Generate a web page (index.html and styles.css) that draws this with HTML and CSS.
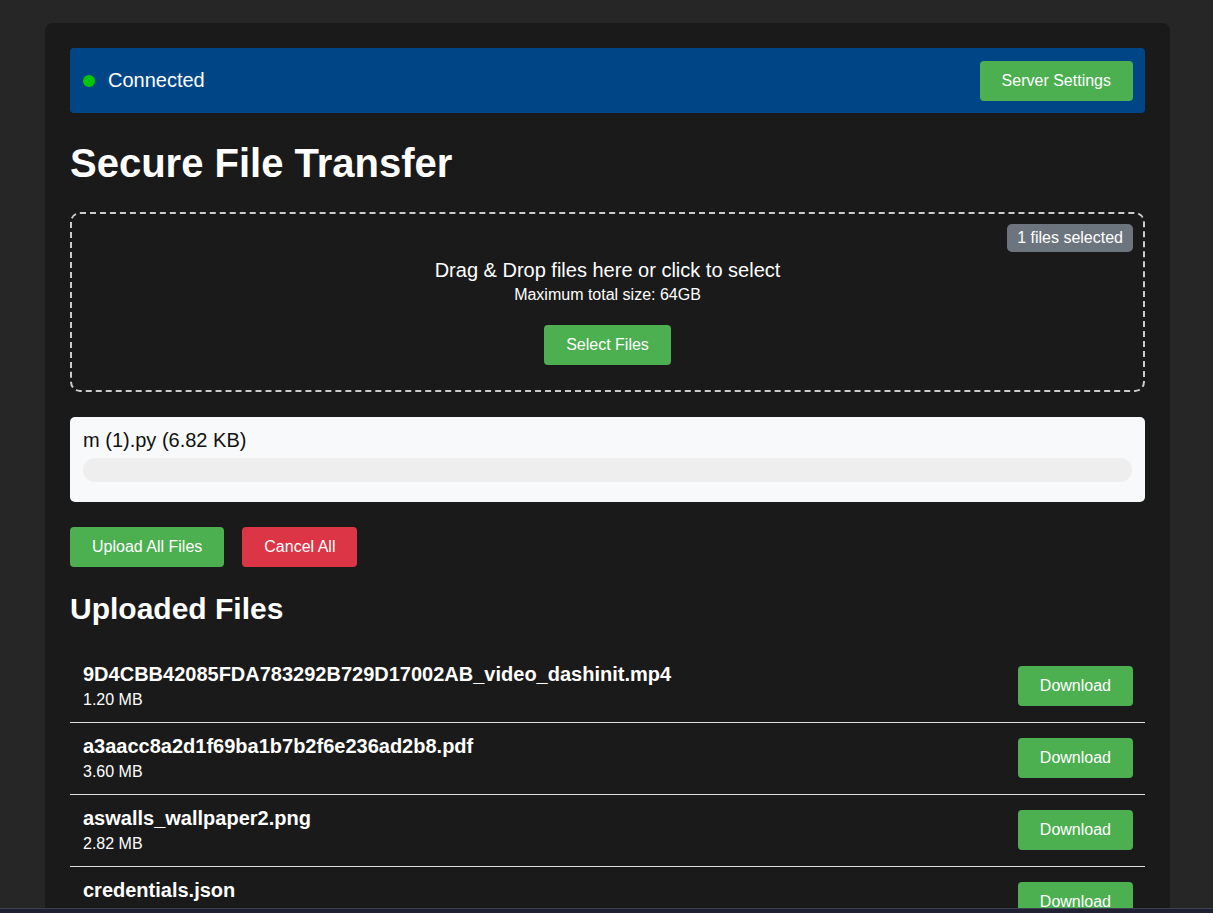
FILE: index.html
```html
<!DOCTYPE html>
<html lang="en">
<head>
<meta charset="utf-8">
<title>Secure File Transfer</title>
<link rel="stylesheet" href="styles.css">
</head>
<body>
<div class="container">
  <div class="status-bar">
    <div class="status">
      <span class="status-dot"></span>
      <span class="status-text">Connected</span>
    </div>
    <button class="btn btn-green">Server Settings</button>
  </div>

  <h1 class="title">Secure File Transfer</h1>

  <div class="dropzone">
    <span class="badge">1 files selected</span>
    <p class="drop-main">Drag &amp; Drop files here or click to select</p>
    <p class="drop-sub">Maximum total size: 64GB</p>
    <button class="btn btn-green select-btn">Select Files</button>
  </div>

  <div class="queue-item">
    <div class="queue-name">m (1).py (6.82 KB)</div>
    <div class="progress"><div class="progress-fill" style="width:0%"></div></div>
  </div>

  <div class="actions">
    <button class="btn btn-green">Upload All Files</button>
    <button class="btn btn-red">Cancel All</button>
  </div>

  <h2 class="subtitle">Uploaded Files</h2>

  <ul class="file-list">
    <li class="file-row">
      <div class="file-info">
        <div class="file-name">9D4CBB42085FDA783292B729D17002AB_video_dashinit.mp4</div>
        <div class="file-size">1.20 MB</div>
      </div>
      <button class="btn btn-green">Download</button>
    </li>
    <li class="file-row">
      <div class="file-info">
        <div class="file-name">a3aacc8a2d1f69ba1b7b2f6e236ad2b8.pdf</div>
        <div class="file-size">3.60 MB</div>
      </div>
      <button class="btn btn-green">Download</button>
    </li>
    <li class="file-row">
      <div class="file-info">
        <div class="file-name">aswalls_wallpaper2.png</div>
        <div class="file-size">2.82 MB</div>
      </div>
      <button class="btn btn-green">Download</button>
    </li>
    <li class="file-row">
      <div class="file-info">
        <div class="file-name">credentials.json</div>
        <div class="file-size">15.41 KB</div>
      </div>
      <button class="btn btn-green">Download</button>
    </li>
    <li class="file-row">
      <div class="file-info">
        <div class="file-name">notes.txt</div>
        <div class="file-size">2.10 KB</div>
      </div>
      <button class="btn btn-green">Download</button>
    </li>
  </ul>
</div>
<div class="screen-edge"></div>
</body>
</html>
```

FILE: styles.css
```css
* {
  box-sizing: border-box;
}

html, body {
  margin: 0;
  background: #262626;
}

body {
  padding: 23px 43px 0 45px;
  font-family: "Liberation Sans", Arial, sans-serif;
  color: #ffffff;
}

.container {
  background: #1a1a1a;
  border-radius: 8px;
  padding: 25px;
}

.btn {
  font-family: "Liberation Sans", Arial, sans-serif;
  font-size: 16px;
  line-height: 18px;
  padding: 11px 22px;
  border: none;
  border-radius: 4px;
  color: #ffffff;
  cursor: pointer;
}

.btn-green {
  background: #4caf50;
}

.btn-red {
  background: #dc3545;
}

.status-bar {
  display: flex;
  align-items: center;
  justify-content: space-between;
  height: 65px;
  padding: 0 12px 0 13px;
  background: #004687;
  border-radius: 4px;
}

.status {
  display: flex;
  align-items: center;
  gap: 13px;
}

.status-dot {
  width: 12px;
  height: 12px;
  border-radius: 50%;
  background: #00c800;
}

.status-text {
  font-size: 20px;
  line-height: 23px;
}

.title {
  margin: 27px 0 26px;
  font-size: 40px;
  line-height: 46px;
  font-weight: bold;
}

.dropzone {
  position: relative;
  border: 2px dashed #cccccc;
  border-radius: 10px;
  padding: 45px 20px 25px;
  text-align: center;
}

.badge {
  position: absolute;
  top: 10px;
  right: 10px;
  background: #6c757d;
  color: #ffffff;
  font-size: 16px;
  line-height: 18px;
  padding: 5px 10px;
  border-radius: 5px;
}

.drop-main {
  margin: 0;
  font-size: 20px;
  line-height: 23px;
}

.drop-sub {
  margin: 4px 0 0;
  font-size: 16px;
  line-height: 18px;
}

.select-btn {
  margin-top: 21px;
}

.queue-item {
  margin-top: 25px;
  background: #f8f9fa;
  border-radius: 5px;
  padding: 12px 13px 12px 13px;
}

.queue-name {
  color: #111111;
  font-size: 20px;
  line-height: 23px;
}

.progress {
  margin: 6px 0 8px;
  height: 24px;
  border-radius: 12px;
  background: #eeeeee;
  overflow: hidden;
}

.progress-fill {
  height: 100%;
  background: #4caf50;
}

.actions {
  display: flex;
  gap: 18px;
  margin-top: 25px;
}

.subtitle {
  margin: 25px 0 25px;
  font-size: 30px;
  line-height: 34px;
  font-weight: bold;
}

.file-list {
  list-style: none;
  margin: 0;
  padding: 0;
}

.file-row {
  display: flex;
  align-items: center;
  justify-content: space-between;
  padding: 12px 12px 13px 13px;
  border-bottom: 1px solid #dddddd;
}

.file-name {
  font-size: 20px;
  line-height: 23px;
  font-weight: bold;
}

.file-size {
  margin-top: 4px;
  font-size: 16px;
  line-height: 19px;
}

.screen-edge {
  position: fixed;
  left: 0;
  right: 0;
  bottom: 0;
  height: 5px;
  background: #1f2133;
  border-top: 1px solid #3c3f52;
}
```
